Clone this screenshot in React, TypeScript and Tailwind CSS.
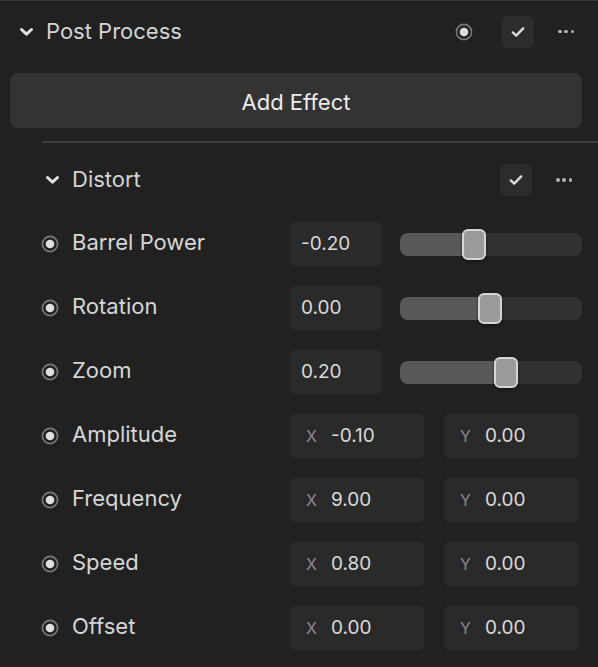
import React from "react";

const FONT = { fontFamily: "Inter, 'Noto Sans', sans-serif" };

function Chevron() {
  return (
    <svg width="15" height="10" viewBox="0 0 15 10" fill="none">
      <path
        d="M2.5 2.5 L7.5 7.2 L12.5 2.5"
        stroke="#e2e2e2"
        strokeWidth="3"
        strokeLinecap="round"
        strokeLinejoin="round"
      />
    </svg>
  );
}

function Radio() {
  return (
    <svg width="18" height="18" viewBox="0 0 18 18" fill="none">
      <circle cx="9" cy="9" r="7.6" stroke="#7a7a7a" strokeWidth="1.6" />
      <circle cx="9" cy="9" r="4.3" fill="#dedede" />
    </svg>
  );
}

function CheckButton() {
  return (
    <div className="flex h-8 w-8 items-center justify-center rounded-md bg-[#2c2c2c]">
      <svg width="16" height="16" viewBox="0 0 16 16" fill="none">
        <path
          d="M2.8 8.4 L6.2 11.6 L13.2 4.4"
          stroke="#dcdcdc"
          strokeWidth="2.4"
          strokeLinecap="round"
          strokeLinejoin="round"
        />
      </svg>
    </div>
  );
}

function Dots() {
  return (
    <div className="flex w-4 items-center justify-between">
      <span className="h-[3.5px] w-[3.5px] rounded-full bg-[#b4b4b4]" />
      <span className="h-[3.5px] w-[3.5px] rounded-full bg-[#b4b4b4]" />
      <span className="h-[3.5px] w-[3.5px] rounded-full bg-[#b4b4b4]" />
    </div>
  );
}

type Param =
  | { label: string; kind: "slider"; value: number }
  | { label: string; kind: "xy"; x: string; y: string };

const params: Param[] = [
  { label: "Barrel Power", kind: "slider", value: -0.2 },
  { label: "Rotation", kind: "slider", value: 0 },
  { label: "Zoom", kind: "slider", value: 0.2 },
  { label: "Amplitude", kind: "xy", x: "-0.10", y: "0.00" },
  { label: "Frequency", kind: "xy", x: "9.00", y: "0.00" },
  { label: "Speed", kind: "xy", x: "0.80", y: "0.00" },
  { label: "Offset", kind: "xy", x: "0.00", y: "0.00" },
];

const TRACK_W = 182;
const THUMB_W = 24;

function Slider({ value }: { value: number }) {
  // range -1..1, thumb centre travels between the track ends minus half a thumb
  const centre = THUMB_W / 2 + ((value + 1) / 2) * (TRACK_W - THUMB_W);
  return (
    <div className="relative h-[23px] w-[182px] rounded-lg bg-[#323232]">
      <div
        className="absolute left-0 top-0 h-full rounded-l-lg bg-[#585858]"
        style={{ width: centre }}
      />
      <div
        className="absolute top-[-4px] h-[31px] w-[24px] rounded-md border-2 border-[#d6d6d6] bg-[#9b9b9b] shadow-[0_1px_3px_rgba(0,0,0,0.5)]"
        style={{ left: centre - THUMB_W / 2 - 1 }}
      />
    </div>
  );
}

function ParamRow({ p }: { p: Param }) {
  return (
    <div className="flex h-11 items-center">
      <Radio />
      <div className="mb-[3px] ml-[13px] w-[218px] text-[22px] text-[#d6d6d6]">{p.label}</div>
      {p.kind === "slider" ? (
        <div className="flex items-center gap-[18px]">
          <div className="flex h-11 w-[92px] items-center rounded bg-[#2a2a2a] pl-[11px] text-[19px] text-[#dadada]">
            {p.value.toFixed(2)}
          </div>
          <Slider value={p.value} />
        </div>
      ) : (
        <div className="flex items-center gap-5">
          {[
            ["X", p.x],
            ["Y", p.y],
          ].map(([axis, v]) => (
            <div
              key={axis}
              className="flex h-11 w-[134px] items-center rounded bg-[#2a2a2a] pl-4 text-[19px] text-[#dadada]"
            >
              <span className="w-[25px] text-[16px] text-[#8a8a8a]">{axis}</span>
              <span>{v}</span>
            </div>
          ))}
        </div>
      )}
    </div>
  );
}

export default function App() {
  return (
    <div
      className="h-[667px] w-[598px] overflow-hidden border-t border-[#383838] bg-[#212121]"
      style={FONT}
    >
      <div className="flex h-[61px] items-center pl-[19px] pr-[24px]">
        <Chevron />
        <span className="ml-[12px] text-[22px] text-[#d4d4d4]">Post Process</span>
        <div className="ml-auto flex items-center">
          <Radio />
          <div className="ml-[29px]">
            <CheckButton />
          </div>
          <div className="ml-[24px]">
            <Dots />
          </div>
        </div>
      </div>

      <div className="ml-[10px] mr-[16px] mt-[11px] flex h-[55px] items-center justify-center rounded-lg bg-[#333333] pt-1 text-[22px] text-[#ececec]">
        Add Effect
      </div>

      <div className="ml-[42px] mt-[13px] h-[2px] bg-[#3e3e3e]" />

      <div className="ml-[41px]">
        <div className="mt-[21px] flex h-8 items-center pl-[4px] pr-[26px]">
          <Chevron />
          <span className="mb-[2px] ml-[12px] text-[22px] text-[#d4d4d4]">Distort</span>
          <div className="ml-auto flex items-center">
            <CheckButton />
            <div className="ml-[24px]">
              <Dots />
            </div>
          </div>
        </div>

        <div className="mt-[26px] flex flex-col gap-5">
          {params.map((p) => (
            <ParamRow key={p.label} p={p} />
          ))}
        </div>
      </div>
    </div>
  );
}
